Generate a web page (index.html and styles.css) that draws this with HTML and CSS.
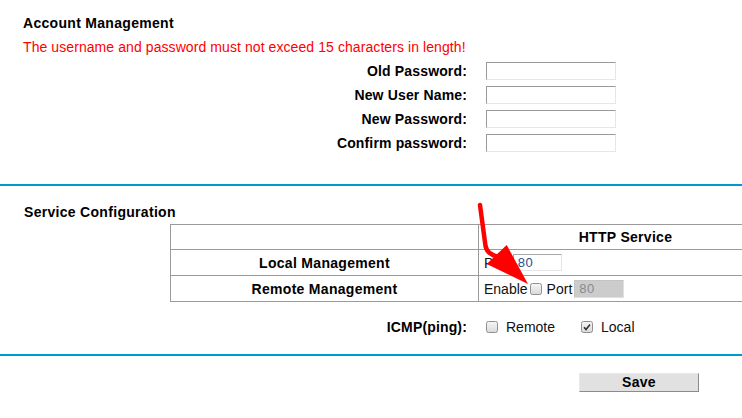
FILE: index.html
```html
<!DOCTYPE html>
<html>
<head>
<meta charset="utf-8">
<link rel="stylesheet" href="styles.css">
</head>
<body>
<div class="page">
  <section class="account">
    <h2 class="title">Account Management</h2>
    <p class="warn">The username and password must not exceed 15 characters in length!</p>
    <div class="form">
      <label class="lbl">Old Password:</label><span class="field"><input class="txt" type="password"></span>
      <label class="lbl">New User Name:</label><span class="field"><input class="txt" type="text"></span>
      <label class="lbl">New Password:</label><span class="field"><input class="txt" type="password"></span>
      <label class="lbl">Confirm password:</label><span class="field"><input class="txt" type="password"></span>
    </div>
  </section>

  <div class="rule rule-top"></div>

  <section class="service">
    <h2 class="title title-svc">Service Configuration</h2>
    <table class="svc">
      <tr class="r1">
        <td class="c1"></td>
        <td class="c2 head">HTTP Service</td>
      </tr>
      <tr class="r2">
        <td class="c1 name">Local Management</td>
        <td class="c2"><div class="cell"><span>Port</span><input class="port" type="text" value="80"></div></td>
      </tr>
      <tr class="r3">
        <td class="c1 name">Remote Management</td>
        <td class="c2"><div class="cell"><span>Enable</span><span class="cb cb-en"><svg width="12" height="12" viewBox="0 0 12 12"><defs><linearGradient id="g1" x1="0" y1="0" x2="0" y2="1"><stop offset="0" stop-color="#f6f6f6"/><stop offset="1" stop-color="#d9d9d9"/></linearGradient></defs><rect x="0.5" y="0.5" width="11" height="11" rx="2" fill="url(#g1)" stroke="#8f8f8f"/></svg></span><span class="port-lbl">Port</span><input class="port dis" type="text" value="80" disabled></div></td>
      </tr>
    </table>

    <div class="form icmp">
      <span class="lbl">ICMP(ping):</span>
      <div class="opts">
        <span class="cb"><svg width="12" height="12" viewBox="0 0 12 12"><defs><linearGradient id="g2" x1="0" y1="0" x2="0" y2="1"><stop offset="0" stop-color="#f6f6f6"/><stop offset="1" stop-color="#d9d9d9"/></linearGradient></defs><rect x="0.5" y="0.5" width="11" height="11" rx="2" fill="url(#g2)" stroke="#8f8f8f"/></svg></span>
        <span class="opt-txt">Remote</span>
        <span class="cb cb-2"><svg width="12" height="12" viewBox="0 0 12 12"><defs><linearGradient id="g3" x1="0" y1="0" x2="0" y2="1"><stop offset="0" stop-color="#f6f6f6"/><stop offset="1" stop-color="#d9d9d9"/></linearGradient></defs><rect x="0.5" y="0.5" width="11" height="11" rx="2" fill="url(#g3)" stroke="#8f8f8f"/><path d="M3 6.2 L5 8.4 L9 3.4" fill="none" stroke="#333" stroke-width="1.6"/></svg></span>
        <span class="opt-txt">Local</span>
      </div>
    </div>
  </section>

  <div class="rule rule-bottom"></div>

  <div class="actions">
    <button class="save" type="button">Save</button>
  </div>

  <svg class="arrow" width="70" height="95" viewBox="0 0 70 95">
    <path d="M10 5 L15.5 46 Q17 54 28 57" fill="none" stroke="#ff0000" stroke-width="4.5" stroke-linecap="round" stroke-linejoin="round"/>
    <polygon points="36.7,45 16.7,64 58,84" fill="#ff0000"/>
  </svg>
</div>
</body>
</html>
```

FILE: styles.css
```css
html, body {
  margin: 0;
  padding: 0;
  background: #ffffff;
  overflow: hidden;
}

body {
  font-family: "Liberation Sans", Arial, sans-serif;
  font-size: 14px;
  color: #000;
}

.page {
  position: relative;
  width: 742px;
  height: 418px;
  overflow: hidden;
}

.account {
  padding-top: 11px;
}

.title {
  margin: 0;
  padding-left: 23px;
  font-size: 14px;
  font-weight: bold;
  line-height: 24px;
  letter-spacing: 0.3px;
}

.title-svc {
  padding-left: 24px;
}

.warn {
  margin: 0;
  padding-left: 23px;
  line-height: 24px;
  color: #ff0000;
  letter-spacing: 0.08px;
}

.form {
  display: grid;
  grid-template-columns: 467px 140px;
  grid-auto-rows: 24px;
  column-gap: 19px;
  align-items: center;
}

.lbl {
  text-align: right;
  font-weight: bold;
  line-height: 24px;
  letter-spacing: 0.15px;
}

.field {
  display: flex;
  align-items: center;
}

.txt {
  box-sizing: border-box;
  width: 130px;
  height: 18px;
  margin: 0;
  margin-top: -1px;
  padding: 0 3px;
  border: 1px solid;
  border-color: #999 #e6e6e6 #e6e6e6 #999;
  background: #fff;
  font: 13px "Liberation Sans", Arial, sans-serif;
}

.rule {
  height: 2px;
  background: #0099cc;
  width: 100%;
}

.rule-top {
  margin-top: 29px;
}

.service {
  padding-top: 14px;
}

.svc {
  margin-left: 170px;
  width: 603px;
  border-collapse: collapse;
  table-layout: fixed;
}

.svc td {
  border: 1px solid #9b9b9b;
  padding: 0;
  vertical-align: middle;
}

.svc .c1 {
  width: 307px;
  text-align: center;
}

.svc .r1 { height: 25px; }
.svc .r2 { height: 26px; }
.svc .r3 { height: 26px; }

.svc .name,
.svc .head {
  font-weight: bold;
  letter-spacing: 0.3px;
}

.svc .head {
  text-align: center;
}

.cell {
  display: flex;
  align-items: center;
  padding-left: 5px;
  color: #111;
}

.port {
  box-sizing: border-box;
  width: 49px;
  height: 17px;
  margin: 0 0 0 3px;
  padding: 0 0 0 4px;
  border: 1px solid;
  border-color: #a8a8a8 #e6e6e6 #e6e6e6 #a8a8a8;
  background: #fff;
  color: #2a4f8a;
  font: 13px "Liberation Sans", Arial, sans-serif;
  letter-spacing: 0.5px;
}

.port.dis {
  width: 50px;
  height: 18px;
  margin-left: 2px;
  background: #cccccc;
  border-color: #c4c4c4 #e0e0e0 #e0e0e0 #c4c4c4;
  color: #8a8a8a;
}

.cb {
  display: inline-flex;
  width: 12px;
  height: 12px;
}

.cb-en {
  margin-left: 2px;
  margin-right: 5px;
}

.icmp {
  margin-top: 13px;
}

.opts {
  display: flex;
  align-items: center;
  white-space: nowrap;
}

.opt-txt {
  margin-left: 8px;
  color: #111;
}

.cb-2 {
  margin-left: 26px;
}

.rule-bottom {
  margin-top: 15px;
}

.actions {
  padding-top: 17px;
  padding-left: 579px;
}

.save {
  display: block;
  box-sizing: border-box;
  width: 120px;
  height: 19px;
  margin: 0;
  padding: 0;
  border: 1px solid;
  border-color: #e8e8e8 #8c8c8c #8c8c8c #e8e8e8;
  background: #e1e1e1;
  font: bold 14px "Liberation Sans", Arial, sans-serif;
  letter-spacing: 0.3px;
  color: #000;
  line-height: 17px;
}

.arrow {
  position: absolute;
  left: 470px;
  top: 200px;
}
```
